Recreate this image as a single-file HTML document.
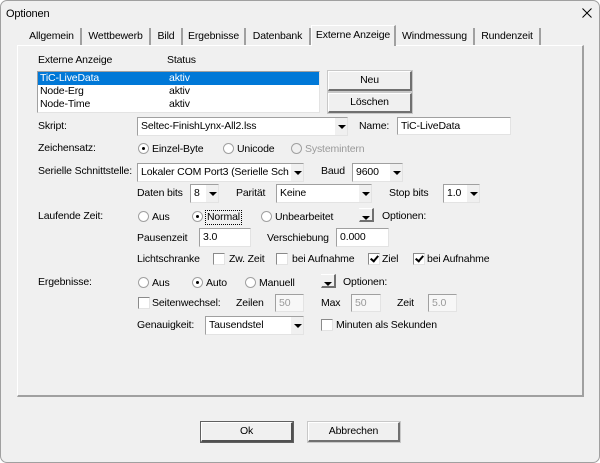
<!DOCTYPE html><html><head><style>
*{margin:0;padding:0;box-sizing:border-box}
body{width:600px;height:463px;background:#fff;font-family:"Liberation Sans",sans-serif;font-size:10.5px;letter-spacing:-0.15px;color:#000;position:relative;overflow:hidden}
.win{position:absolute;left:0;top:0;width:600px;height:463px;background:#f0f0f0;border:1px solid #a0a0a0;border-radius:7px}
.a{position:absolute;white-space:nowrap;line-height:13px}
.tab{position:absolute;top:27px;height:18px;border-right:2px solid #a0a0a0;text-align:center;line-height:17px;background:#f0f0f0}
.panel{position:absolute;left:16px;top:44px;width:567px;height:352px;border:1px solid #fff;border-right:2px solid #a0a0a0;border-bottom:2px solid #a0a0a0}
.in{position:absolute;background:#fff;border:1px solid #a0a0a0;border-right-color:#e3e3e3;border-bottom-color:#e3e3e3;line-height:16px;padding-left:3px;overflow:hidden;white-space:nowrap}
.arr{position:absolute;right:0;top:0;bottom:0;width:13px;background:#f0f0f0;border-left:1px solid #fff}
.arr:after{content:"";position:absolute;left:3px;top:7px;border-left:4px solid transparent;border-right:4px solid transparent;border-top:4px solid #000}
.btn{position:absolute;background:#f0f0f0;border:1px solid #fff;border-right:2px solid #707070;border-bottom:2px solid #707070;outline:1px solid #c8c8c8;text-align:center;line-height:16px}
.r{position:absolute;width:11px;height:11px;border-radius:50%;background:#fff;border:1px solid #a0a0a0}
.r.on:after{content:"";position:absolute;left:3px;top:3px;width:3px;height:3px;border-radius:50%;background:#000}
.c{position:absolute;width:12px;height:12px;background:#fff;border:1px solid #8a8a8a;border-right-color:#e3e3e3;border-bottom-color:#e3e3e3}
.c.on:after{content:"";position:absolute;left:3px;top:0px;width:3px;height:6px;border-right:2px solid #000;border-bottom:2px solid #000;transform:rotate(40deg)}
.g{color:#9a9a9a}
</style></head><body><div class="win">
<div class="a" style="left:5px;top:7px;font-size:11px">Optionen</div>
<svg style="position:absolute;left:581px;top:7px" width="10" height="10"><path d="M0.5 0.5L9.5 9.5M9.5 0.5L0.5 9.5" stroke="#000" stroke-width="1"/></svg>
<div class="tab" style="left:22px;width:59px">Allgemein</div>
<div class="tab" style="left:81px;width:69px">Wettbewerb</div>
<div class="tab" style="left:150px;width:32px">Bild</div>
<div class="tab" style="left:182px;width:63px">Ergebnisse</div>
<div class="tab" style="left:245px;width:65px">Datenbank</div>
<div class="tab" style="left:310px;width:85px;top:24px;height:21px;z-index:2;border-left:1px solid #fff;border-top:1px solid #fff;line-height:19px">Externe Anzeige</div>
<div class="tab" style="left:395px;width:79px">Windmessung</div>
<div class="tab" style="left:474px;width:66px">Rundenzeit</div>
<div class="panel"></div>

<div class="a" style="left:37px;top:53px">Externe Anzeige</div>
<div class="a" style="left:166px;top:53px">Status</div>
<div class="in" style="left:36px;top:70px;width:283px;height:42px;padding:0;line-height:13px">
<div style="background:#0078d7;color:#fff;height:13px;padding-left:2px">TiC-LiveData<span style="position:absolute;left:131px">aktiv</span></div>
<div style="padding-left:2px">Node-Erg<span style="position:absolute;left:131px">aktiv</span></div>
<div style="padding-left:2px">Node-Time<span style="position:absolute;left:131px">aktiv</span></div></div>
<div class="btn" style="left:327px;top:70px;width:84px;height:20px">Neu</div>
<div class="btn" style="left:327px;top:92px;width:84px;height:20px">Löschen</div>

<div class="a" style="left:37px;top:119px">Skript:</div>
<div class="in" style="left:136px;top:116px;width:211px;height:19px">Seltec-FinishLynx-All2.lss<div class="arr"></div></div>
<div class="a" style="left:358px;top:119px">Name:</div>
<div class="in" style="left:396px;top:116px;width:114px;height:18px">TiC-LiveData</div>

<div class="a" style="left:37px;top:141px">Zeichensatz:</div>
<div class="r on" style="left:137px;top:142px"></div><div class="a" style="left:151px;top:142px">Einzel-Byte</div>
<div class="r" style="left:222px;top:142px"></div><div class="a" style="left:236px;top:142px">Unicode</div>
<div class="r" style="left:290px;top:142px;background:#f0f0f0"></div><div class="a g" style="left:304px;top:142px">Systemintern</div>

<div class="a" style="left:37px;top:164px">Serielle Schnittstelle:</div>
<div class="in" style="left:136px;top:162px;width:167px;height:19px">Lokaler COM Port3 (Serielle Sch<div class="arr"></div></div>
<div class="a" style="left:320px;top:164px">Baud</div>
<div class="in" style="left:351px;top:162px;width:51px;height:19px">9600<div class="arr"></div></div>
<div class="a" style="left:136px;top:186px">Daten bits</div>
<div class="in" style="left:189px;top:183px;width:29px;height:19px">8<div class="arr"></div></div>
<div class="a" style="left:235px;top:186px">Parität</div>
<div class="in" style="left:275px;top:183px;width:96px;height:19px">Keine<div class="arr"></div></div>
<div class="a" style="left:388px;top:186px">Stop bits</div>
<div class="in" style="left:442px;top:183px;width:37px;height:19px">1.0<div class="arr"></div></div>

<div class="a" style="left:37px;top:209px">Laufende Zeit:</div>
<div class="r" style="left:137px;top:210px"></div><div class="a" style="left:151px;top:210px">Aus</div>
<div class="r on" style="left:191px;top:210px"></div><div class="a" style="left:204px;top:209px;border:1px dotted #000;padding:0 1px">Normal</div>
<div class="r" style="left:260px;top:210px"></div><div class="a" style="left:274px;top:210px">Unbearbeitet</div>
<div class="btn" style="left:358px;top:207px;width:15px;height:14px;outline:none"><div class="arr" style="border:none;width:13px"></div></div>
<div class="a" style="left:381px;top:209px">Optionen:</div>
<div class="a" style="left:136px;top:231px">Pausenzeit</div>
<div class="in" style="left:198px;top:227px;width:52px;height:19px">3.0</div>
<div class="a" style="left:266px;top:231px">Verschiebung</div>
<div class="in" style="left:335px;top:227px;width:53px;height:19px">0.000</div>
<div class="a" style="left:136px;top:252px">Lichtschranke</div>
<div class="c" style="left:212px;top:252px"></div><div class="a" style="left:228px;top:252px">Zw. Zeit</div>
<div class="c" style="left:275px;top:252px"></div><div class="a" style="left:291px;top:252px">bei Aufnahme</div>
<div class="c on" style="left:367px;top:252px"></div><div class="a" style="left:381px;top:252px">Ziel</div>
<div class="c on" style="left:412px;top:252px"></div><div class="a" style="left:426px;top:252px">bei Aufnahme</div>

<div class="a" style="left:37px;top:275px">Ergebnisse:</div>
<div class="r" style="left:137px;top:276px"></div><div class="a" style="left:151px;top:276px">Aus</div>
<div class="r on" style="left:191px;top:276px"></div><div class="a" style="left:205px;top:276px">Auto</div>
<div class="r" style="left:244px;top:276px"></div><div class="a" style="left:258px;top:276px">Manuell</div>
<div class="btn" style="left:320px;top:273px;width:15px;height:14px;outline:none"><div class="arr" style="border:none;width:13px"></div></div>
<div class="a" style="left:342px;top:275px">Optionen:</div>
<div class="c" style="left:137px;top:296px"></div><div class="a" style="left:151px;top:296px">Seitenwechsel:</div>
<div class="a" style="left:235px;top:296px">Zeilen</div>
<div class="in g" style="left:274px;top:293px;width:29px;height:18px;background:#f7f7f7">50</div>
<div class="a" style="left:320px;top:296px">Max</div>
<div class="in g" style="left:350px;top:293px;width:30px;height:18px;background:#f7f7f7">50</div>
<div class="a" style="left:396px;top:296px">Zeit</div>
<div class="in g" style="left:427px;top:293px;width:29px;height:18px;background:#f7f7f7">5.0</div>
<div class="a" style="left:136px;top:318px">Genauigkeit:</div>
<div class="in" style="left:204px;top:315px;width:99px;height:19px">Tausendstel<div class="arr"></div></div>
<div class="c" style="left:320px;top:318px"></div><div class="a" style="left:335px;top:318px">Minuten als Sekunden</div>

<div class="btn" style="left:200px;top:421px;width:92px;height:20px;border-color:#fff #505050 #505050 #fff;outline:1px solid #606060">Ok</div>
<div class="btn" style="left:307px;top:421px;width:92px;height:20px">Abbrechen</div>
</div></body></html>
